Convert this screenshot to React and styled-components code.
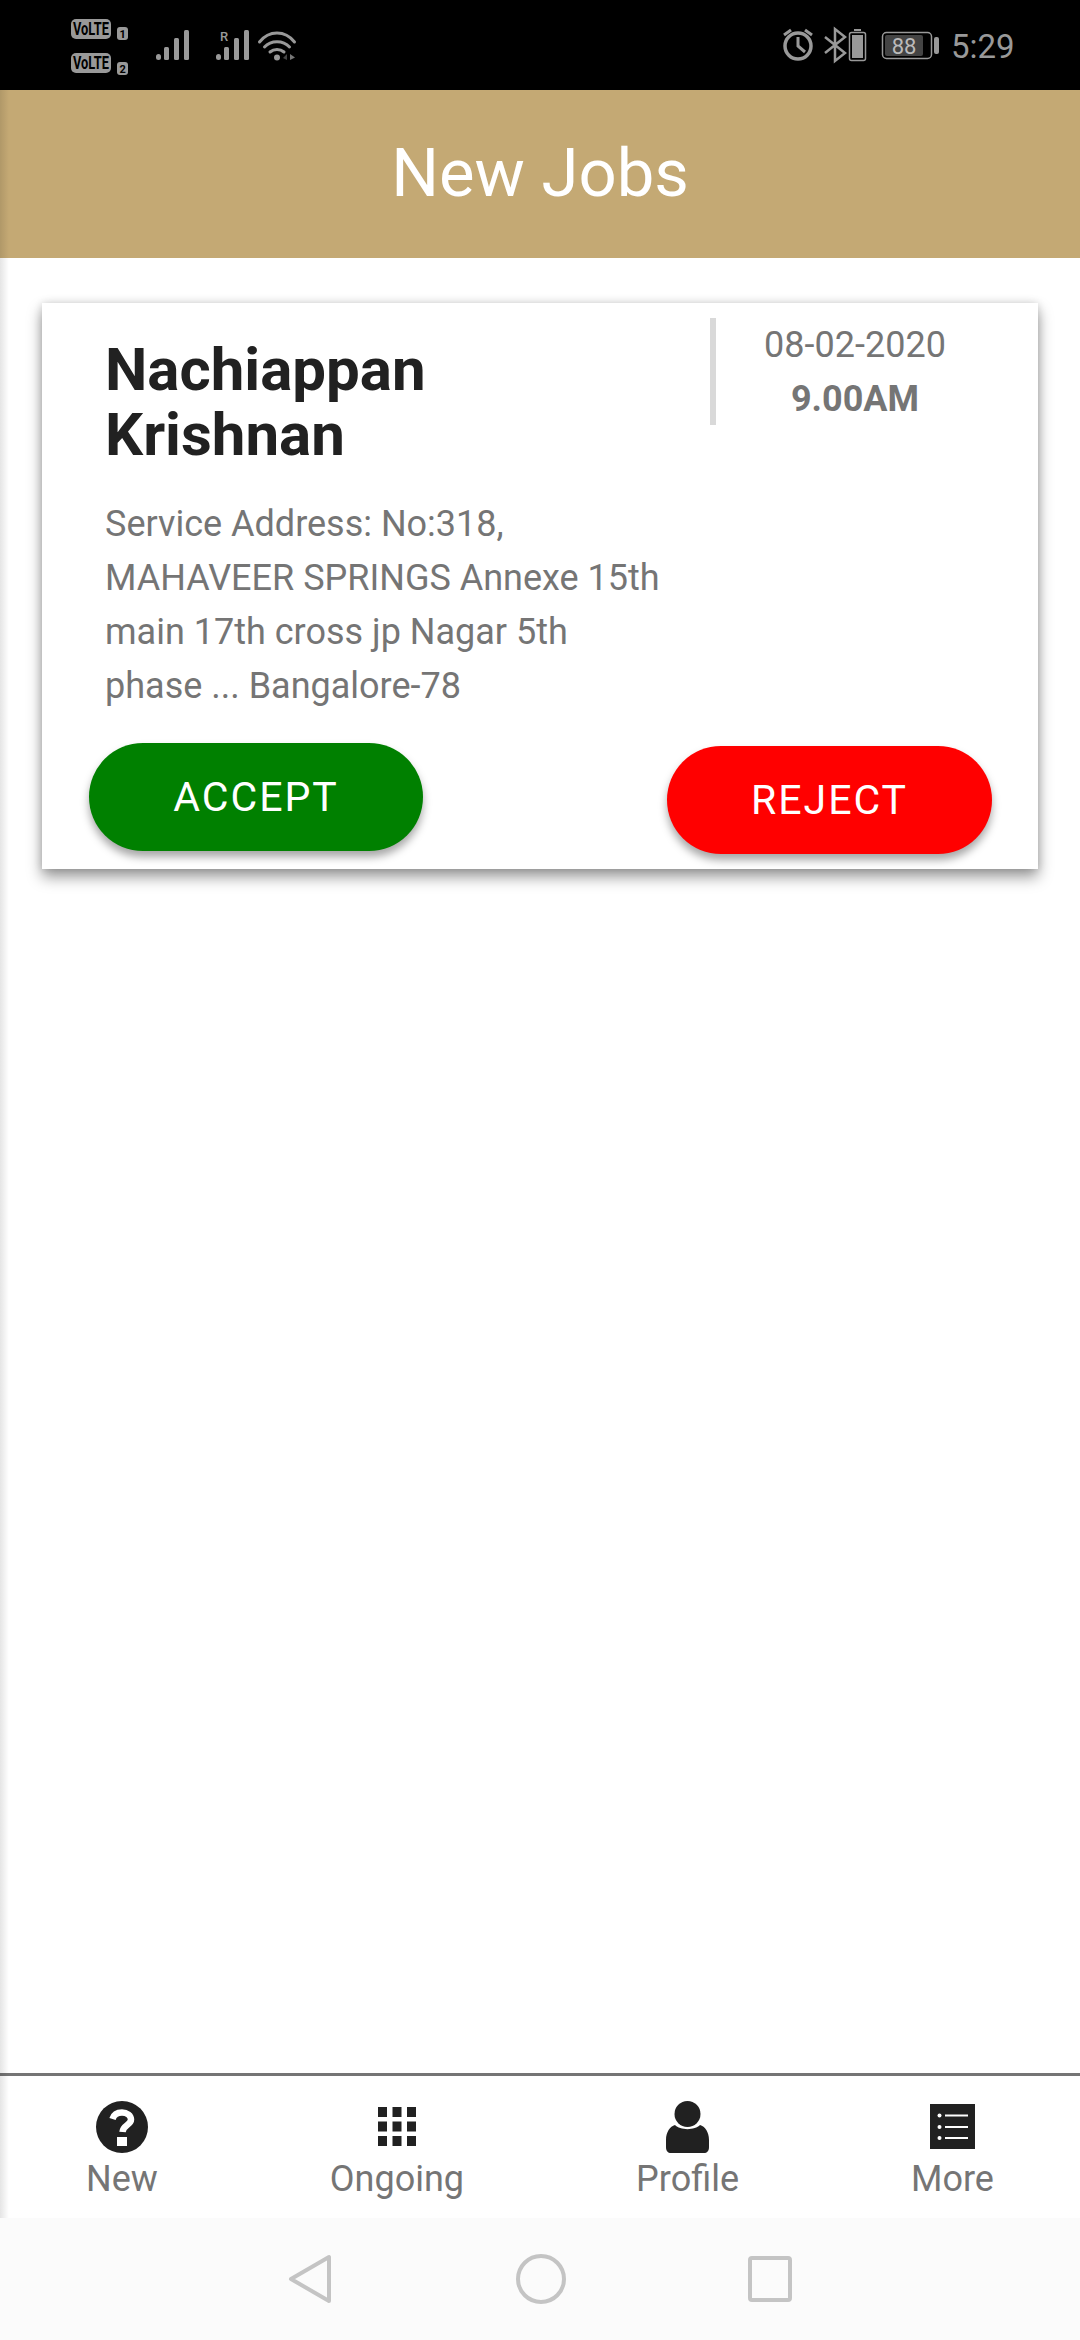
import React from 'react';
import styled, { createGlobalStyle } from 'styled-components';

const GlobalStyle = createGlobalStyle`
  html, body {
    margin: 0;
    padding: 0;
    background: #fff;
    font-family: Roboto, "Liberation Sans", sans-serif;
  }
`;

const Page = styled.div`
  position: relative;
  width: 1080px;
  height: 2340px;
  display: flex;
  flex-direction: column;
  overflow: hidden;
  background: #fff;

  &::after {
    content: '';
    position: absolute;
    left: 0;
    top: 90px;
    width: 9px;
    height: 2128px;
    background: linear-gradient(to right, rgba(0, 0, 0, 0.1), rgba(0, 0, 0, 0));
  }
`;

const StatusBar = styled.div`
  height: 90px;
  flex: none;
  background: #000;
  display: flex;
  justify-content: space-between;
  align-items: flex-start;
  color: #999;
`;

const StatusIcons = styled.svg`
  display: block;
  flex: none;
`;

const Header = styled.header`
  height: 168px;
  flex: none;
  box-sizing: border-box;
  padding-bottom: 2px;
  background: #c4a974;
  display: flex;
  align-items: center;
  justify-content: center;
`;

const Title = styled.h1`
  margin: 0;
  font-size: 67px;
  font-weight: 400;
  color: #fff;
`;

const Content = styled.main`
  flex: 1;
  padding: 45px 42px 0;
`;

const Card = styled.section`
  height: 566px;
  background: #fff;
  box-shadow: 0 8px 14px rgba(0, 0, 0, 0.4), 0 0 8px rgba(0, 0, 0, 0.14);
`;

const TopRow = styled.div`
  display: flex;
  padding-top: 15px;
`;

const Details = styled.div`
  width: 668px;
  padding: 19px 0 0 63px;
  box-sizing: border-box;
`;

const Name = styled.h2`
  margin: 0;
  width: 400px;
  font-size: 60px;
  line-height: 65px;
  font-weight: 700;
  color: #212121;
`;

const Address = styled.p`
  margin: 30px 0 0;
  width: 560px;
  font-size: 36px;
  line-height: 54px;
  color: #757575;
`;

const Schedule = styled.div`
  width: 278px;
  height: 107px;
  border-left: 6px solid #d9d9d9;
  display: flex;
  flex-direction: column;
  align-items: center;
  color: #757575;
`;

const DateText = styled.div`
  font-size: 36px;
  line-height: 52px;
  height: 52px;
  margin-top: 1px;
`;

const TimeText = styled.div`
  font-size: 36px;
  line-height: 56px;
  font-weight: 700;
`;

const Actions = styled.div`
  display: flex;
  justify-content: space-between;
  align-items: flex-start;
  padding: 0 46px 0 47px;
  margin-top: 30px;
`;

const ActionButton = styled.button`
  width: ${props => props.$width}px;
  height: 108px;
  margin-top: ${props => props.$top}px;
  border: none;
  border-radius: 54px;
  background: ${props => props.$color};
  color: #fff;
  font-family: inherit;
  font-size: 41px;
  letter-spacing: 2px;
  box-shadow: 0 6px 8px rgba(0, 0, 0, 0.35);
`;

const BottomNav = styled.nav`
  height: 145px;
  flex: none;
  box-sizing: border-box;
  border-top: 3px solid #757575;
  display: flex;
  justify-content: space-around;
  background: #fff;
`;

const NavItem = styled.div`
  display: flex;
  flex-direction: column;
  align-items: center;
  color: #757575;
`;

const NavIconSlot = styled.div`
  height: 53px;
  margin-top: 24px;
  display: flex;
  align-items: center;
`;

const NavLabel = styled.span`
  font-size: 36px;
  line-height: 44px;
  margin-top: 4px;
`;

const SystemBar = styled.div`
  height: 122px;
  flex: none;
  background: #fbfbfb;
  display: flex;
  align-items: center;
  justify-content: center;
`;

const SystemButton = styled.svg`
  display: block;
  fill: none;
  stroke: #c4c4c4;
  stroke-width: 4;
  stroke-linejoin: round;
  margin-left: ${props => props.$gap}px;
`;

const LeftStatus = () => (
  <StatusIcons width="320" height="90" viewBox="0 0 320 90">
    <rect x="71" y="19" width="40" height="20" rx="5" fill="#999" />
    <text x="73" y="35" fontFamily="Roboto" fontWeight="700" fontSize="18" fill="#000" textLength="36" lengthAdjust="spacingAndGlyphs">VoLTE</text>
    <rect x="117" y="27" width="11" height="13" rx="3" fill="#999" />
    <text x="119.5" y="38" fontFamily="Roboto" fontWeight="700" fontSize="11" fill="#000">1</text>
    <rect x="71" y="53" width="40" height="20" rx="5" fill="#999" />
    <text x="73" y="69" fontFamily="Roboto" fontWeight="700" fontSize="18" fill="#000" textLength="36" lengthAdjust="spacingAndGlyphs">VoLTE</text>
    <rect x="117" y="62" width="11" height="13" rx="3" fill="#999" />
    <text x="119.5" y="73" fontFamily="Roboto" fontWeight="700" fontSize="11" fill="#000">2</text>

    <g fill="#999">
      <rect x="156" y="54" width="5" height="6" rx="2.5" />
      <rect x="164" y="47" width="5" height="13" rx="1.5" />
      <rect x="174" y="38" width="5" height="22" rx="1.5" />
      <rect x="184" y="30" width="5" height="30" rx="1.5" />
      <rect x="216" y="54" width="5" height="6" rx="2.5" />
      <rect x="224" y="47" width="5" height="13" rx="1.5" />
      <rect x="234" y="38" width="5" height="22" rx="1.5" />
      <rect x="244" y="30" width="5" height="30" rx="1.5" />
      <text x="220" y="41" fontFamily="Roboto" fontWeight="500" fontSize="13">R</text>
    </g>

    <g fill="none" stroke="#999" strokeWidth="3" strokeLinecap="round">
      <path d="M259.5 42 C269 30 285 30 294.500 42" />
      <path d="M264.500 47 C271 40 283 40 289.500 47" />
      <path d="M270 52 C274 48.500 280 48.500 284 52" />
    </g>
    <circle cx="277" cy="57.500" r="3" fill="#999" />
    <path d="M283 58 L287 54 V60 Z" fill="#444" />
    <path d="M290 54 L295 57.500 L290 60 Z" fill="#777" />
  </StatusIcons>
);

const RightStatus = () => (
  <StatusIcons width="300" height="90" viewBox="780 0 300 90">
    <g fill="none" stroke="#999" strokeWidth="3.500">
      <circle cx="798" cy="46" r="13" />
      <path d="M798 37 V46 L805 52" strokeWidth="3" />
      <path d="M784 35 L791 30" strokeWidth="3" />
      <path d="M812 35 L805 30" strokeWidth="3" />
    </g>
    <path d="M825 37 L845 53 L835 61 V29 L845 37 L825 53" fill="none" stroke="#999" strokeWidth="2.500" />

    <rect x="854" y="29" width="7" height="2" fill="#999" />
    <rect x="849.500" y="32.500" width="16" height="28" rx="2" fill="none" stroke="#999" strokeWidth="1.500" />
    <rect x="852" y="35" width="11" height="23" fill="#999" />

    <rect x="882.500" y="32.500" width="49" height="26" rx="4" fill="#000" stroke="#999" strokeWidth="1.500" />
    <rect x="885" y="35" width="38" height="21" rx="2" fill="#444" />
    <text x="904" y="54" textAnchor="middle" fontFamily="Roboto" fontSize="22" fill="#bbb">88</text>
    <rect x="934" y="37" width="5" height="17" rx="2" fill="#999" />

    <text x="951" y="58" fontFamily="Roboto" fontSize="33" fill="#999">5:29</text>
  </StatusIcons>
);

const HelpIcon = () => (
  <svg width="52" height="52" viewBox="0 0 52 52">
    <circle cx="26" cy="26" r="26" fill="#212121" />
    <path d="M16.500 18 C18 13 22 11.500 26 11.500 C31 11.500 35 14.500 35 18.500 C35 24 27 24 26.500 31" fill="none" stroke="#fff" strokeWidth="6.500" />
    <rect x="21" y="36" width="10" height="9" fill="#fff" />
  </svg>
);

const GridIcon = () => (
  <svg width="38" height="39" viewBox="0 0 38 39" fill="#212121">
    {[0, 14.500, 29].map(y =>
      [0, 14.500, 29].map(x => <rect key={`${x}-${y}`} x={x} y={y} width="9" height="10" />)
    )}
  </svg>
);

const PersonIcon = () => (
  <svg width="43" height="52" viewBox="0 0 43 52" fill="#212121">
    <circle cx="21.500" cy="13" r="13" />
    <path d="M9 24 C14 29.500 29 29.500 34 24 C39 25.500 43 31 43 39 V46 C43 50 41 52 38 52 H5 C2 52 0 50 0 46 V39 C0 31 4 25.500 9 24 Z" />
  </svg>
);

const ListIcon = () => (
  <svg width="45" height="45" viewBox="0 0 45 45">
    <rect width="45" height="45" fill="#212121" />
    <g fill="#fff">
      <circle cx="9.500" cy="11.500" r="2" />
      <circle cx="9.500" cy="23" r="2" />
      <circle cx="9.500" cy="34" r="2" />
      <rect x="15" y="10.500" width="23" height="2" />
      <rect x="15" y="22" width="23" height="2" />
      <rect x="15" y="33" width="23" height="2" />
    </g>
  </svg>
);

const navItems = [
  { label: 'New', icon: <HelpIcon /> },
  { label: 'Ongoing', icon: <GridIcon /> },
  { label: 'Profile', icon: <PersonIcon /> },
  { label: 'More', icon: <ListIcon /> },
];

const App = () => (
  <Page>
    <GlobalStyle />
    <StatusBar>
      <LeftStatus />
      <RightStatus />
    </StatusBar>

    <Header>
      <Title>New Jobs</Title>
    </Header>

    <Content>
      <Card>
        <TopRow>
          <Details>
            <Name>Nachiappan Krishnan</Name>
            <Address>
              Service Address: No:318, MAHAVEER SPRINGS Annexe 15th main 17th cross jp Nagar 5th phase ... Bangalore-78
            </Address>
          </Details>
          <Schedule>
            <DateText>08-02-2020</DateText>
            <TimeText>9.00AM</TimeText>
          </Schedule>
        </TopRow>
        <Actions>
          <ActionButton $width={334} $top={0} $color="#008000">ACCEPT</ActionButton>
          <ActionButton $width={325} $top={3} $color="#ff0000">REJECT</ActionButton>
        </Actions>
      </Card>
    </Content>

    <BottomNav>
      {navItems.map(item => (
        <NavItem key={item.label}>
          <NavIconSlot>{item.icon}</NavIconSlot>
          <NavLabel>{item.label}</NavLabel>
        </NavItem>
      ))}
    </BottomNav>

    <SystemBar>
      <SystemButton width="44" height="50" viewBox="0 0 44 50" $gap={0}>
        <path d="M41 3 V47 L3 25 Z" />
      </SystemButton>
      <SystemButton width="50" height="50" viewBox="0 0 50 50" $gap={184}>
        <circle cx="25" cy="25" r="23" />
      </SystemButton>
      <SystemButton width="44" height="46" viewBox="0 0 44 46" $gap={182}>
        <rect x="2" y="2" width="40" height="42" rx="2" />
      </SystemButton>
    </SystemBar>
  </Page>
);

export default App;
